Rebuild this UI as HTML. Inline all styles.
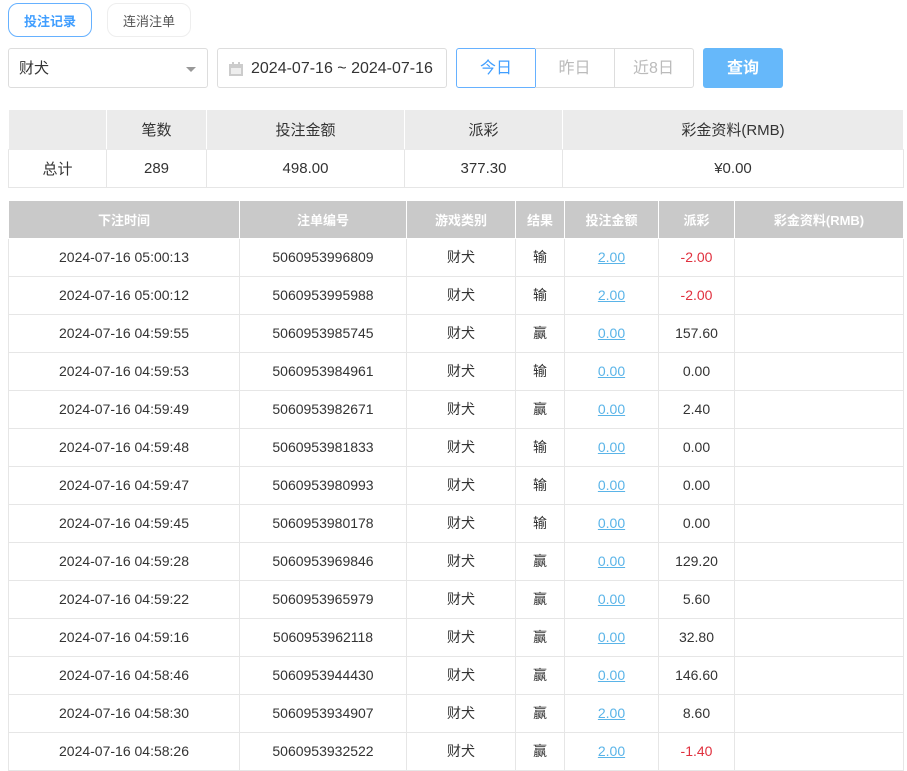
<!DOCTYPE html>
<html><head><meta charset="utf-8"><style>
*{box-sizing:border-box;margin:0;padding:0}
body{width:907px;height:755px;overflow:hidden;background:#fff;font-family:"Liberation Sans","Noto Sans CJK SC",sans-serif;font-size:14px;color:#333;position:relative}
.abs{position:absolute}
.tab{position:absolute;top:3px;height:34px;border-radius:10px;font-size:13px;display:flex;align-items:center;justify-content:center}
table{border-collapse:collapse;position:absolute;left:8px;table-layout:fixed}
td,th{text-align:center;border:1px solid #e6e6e6;font-weight:normal}
#sum{top:109px;width:896px;font-size:15px}
#sum tr:first-child td{background:#ebebeb;height:40px;border-color:#fff #fff #ebebeb}
#sum tr:nth-child(2) td{height:38px}
#main{top:201px;width:896px}
#main th{background:#c9c9c9;color:#fff;font-weight:bold;height:37px;font-size:13px;border:1px solid #fff;border-top:none}
#main td{height:38px;font-size:14px;border-left:none;border-right:1px solid #e6e6e6}
#main td:first-child{border-left:1px solid #e6e6e6}
.l{color:#5ab4e8;text-decoration:underline}
.r{color:#e0303e}
.in{line-height:40px!important}
</style></head><body>
<div class="tab" style="left:8px;width:84px;border:1px solid #66b1ff;color:#409eff;font-weight:bold">投注记录</div>
<div class="tab" style="left:107px;width:84px;border:1px solid #eee;color:#555">连消注单</div>
<div class="abs in" style="left:8px;top:48px;width:200px;height:40px;border:1px solid #ddd;border-radius:3px;padding:0 10px;font-size:15px">财犬<span style="position:absolute;right:11px;top:18px;border:5px solid transparent;border-top:5px solid #999"></span></div>
<div class="abs in" style="left:217px;top:48px;width:230px;height:40px;border:1px solid #ddd;border-radius:3px;font-size:16px;padding-left:33px">
<svg style="position:absolute;left:10px;top:12px" width="16" height="16"><rect x="1" y="3" width="14" height="12" fill="#ccc"/><rect x="3" y="7" width="10" height="6" fill="#eee"/><rect x="4" y="1" width="2" height="3" fill="#ccc"/><rect x="10" y="1" width="2" height="3" fill="#ccc"/></svg>2024-07-16 ~ 2024-07-16</div>
<div class="abs in" style="left:456px;top:48px;width:80px;height:40px;border:1px solid #66b1ff;border-radius:3px 0 0 3px;color:#409eff;text-align:center;font-size:16px">今日</div>
<div class="abs in" style="left:535px;top:48px;width:80px;height:40px;border:1px solid #ddd;border-left:none;color:#bbb;text-align:center;font-size:16px">昨日</div>
<div class="abs in" style="left:614px;top:48px;width:80px;height:40px;border:1px solid #ddd;border-left:none;border-radius:0 3px 3px 0;color:#bbb;text-align:center;font-size:16px">近8日</div>
<div class="abs" style="left:703px;top:48px;width:80px;height:40px;background:#66b8fa;border-radius:3px;color:#fff;text-align:center;line-height:41px;font-size:16px;font-weight:bold">查询</div>
<table id="sum"><colgroup><col style="width:98px"><col style="width:100px"><col style="width:198px"><col style="width:158px"><col></colgroup>
<tr><td></td><td>笔数</td><td>投注金额</td><td>派彩</td><td>彩金资料(RMB)</td></tr>
<tr><td>总计</td><td>289</td><td>498.00</td><td>377.30</td><td>¥0.00</td></tr></table>
<table id="main"><colgroup><col style="width:231px"><col style="width:167px"><col style="width:109px"><col style="width:49px"><col style="width:94px"><col style="width:76px"><col></colgroup>
<tr><th>下注时间</th><th>注单编号</th><th>游戏类别</th><th>结果</th><th>投注金额</th><th>派彩</th><th>彩金资料(RMB)</th></tr>
<tr><td>2024-07-16 05:00:13</td><td>5060953996809</td><td>财犬</td><td>输</td><td><span class="l">2.00</span></td><td class="r">-2.00</td><td></td></tr>
<tr><td>2024-07-16 05:00:12</td><td>5060953995988</td><td>财犬</td><td>输</td><td><span class="l">2.00</span></td><td class="r">-2.00</td><td></td></tr>
<tr><td>2024-07-16 04:59:55</td><td>5060953985745</td><td>财犬</td><td>赢</td><td><span class="l">0.00</span></td><td>157.60</td><td></td></tr>
<tr><td>2024-07-16 04:59:53</td><td>5060953984961</td><td>财犬</td><td>输</td><td><span class="l">0.00</span></td><td>0.00</td><td></td></tr>
<tr><td>2024-07-16 04:59:49</td><td>5060953982671</td><td>财犬</td><td>赢</td><td><span class="l">0.00</span></td><td>2.40</td><td></td></tr>
<tr><td>2024-07-16 04:59:48</td><td>5060953981833</td><td>财犬</td><td>输</td><td><span class="l">0.00</span></td><td>0.00</td><td></td></tr>
<tr><td>2024-07-16 04:59:47</td><td>5060953980993</td><td>财犬</td><td>输</td><td><span class="l">0.00</span></td><td>0.00</td><td></td></tr>
<tr><td>2024-07-16 04:59:45</td><td>5060953980178</td><td>财犬</td><td>输</td><td><span class="l">0.00</span></td><td>0.00</td><td></td></tr>
<tr><td>2024-07-16 04:59:28</td><td>5060953969846</td><td>财犬</td><td>赢</td><td><span class="l">0.00</span></td><td>129.20</td><td></td></tr>
<tr><td>2024-07-16 04:59:22</td><td>5060953965979</td><td>财犬</td><td>赢</td><td><span class="l">0.00</span></td><td>5.60</td><td></td></tr>
<tr><td>2024-07-16 04:59:16</td><td>5060953962118</td><td>财犬</td><td>赢</td><td><span class="l">0.00</span></td><td>32.80</td><td></td></tr>
<tr><td>2024-07-16 04:58:46</td><td>5060953944430</td><td>财犬</td><td>赢</td><td><span class="l">0.00</span></td><td>146.60</td><td></td></tr>
<tr><td>2024-07-16 04:58:30</td><td>5060953934907</td><td>财犬</td><td>赢</td><td><span class="l">2.00</span></td><td>8.60</td><td></td></tr>
<tr><td>2024-07-16 04:58:26</td><td>5060953932522</td><td>财犬</td><td>赢</td><td><span class="l">2.00</span></td><td class="r">-1.40</td><td></td></tr>
</table>
</body></html>
